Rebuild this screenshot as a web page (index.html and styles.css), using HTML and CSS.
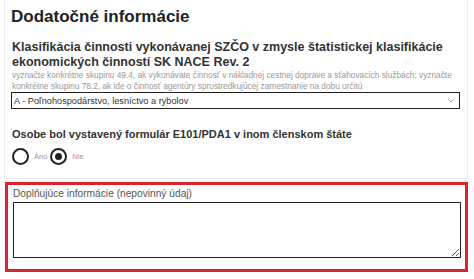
FILE: index.html
```html
<!DOCTYPE html>
<html lang="sk">
<head>
    <meta charset="UTF-8">
    <meta name="viewport" content="width=device-width, initial-scale=1.0">
    <title>Dodatočné informácie</title>
    <link rel="stylesheet" href="styles.css">
</head>
<body>
    <div class="form-card">
        <h2 class="card-title">Dodatočné informácie</h2>

        <div class="form-group">
            <label class="group-label" for="nace">Klasifikácia činnosti vykonávanej SZČO v zmysle štatistickej klasifikácie ekonomických činností SK NACE Rev. 2</label>
            <p class="group-hint">vyznačte konkrétne skupinu 49.4, ak vykonávate činnosť v nákladnej cestnej doprave a sťahovacích službách; vyznačte konkrétne skupinu 78.2, ak ide o činnosť agentúry sprostredkujúcej zamestnanie na dobu určitú</p>
            <div class="select-wrap">
                <select id="nace" class="form-select">
                    <option>A - Poľnohospodárstvo, lesníctvo a rybolov</option>
                </select>
                <svg class="select-arrow" width="6" height="4" viewBox="0 0 6 4"><path d="M0.5 0.5 L3 3 L5.5 0.5" fill="none" stroke="#888" stroke-width="0.8"/></svg>
            </div>
        </div>

        <div class="form-group radio-group">
            <div class="radio-label">Osobe bol vystavený formulár E101/PDA1 v inom členskom štáte</div>
            <div class="radio-row">
                <label class="radio-option">
                    <span class="radio-circle"></span>
                    <span class="radio-text">Áno</span>
                </label>
                <label class="radio-option">
                    <span class="radio-circle checked"></span>
                    <span class="radio-text">Nie</span>
                </label>
            </div>
        </div>
    </div>

    <div class="highlight-box">
        <label class="optional-label" for="notes">Doplňujúce informácie (nepovinný údaj)</label>
        <textarea id="notes" class="form-textarea"></textarea>
    </div>
</body>
</html>
```

FILE: styles.css
```css
/* Base styles */
body {
    font-family: "Liberation Sans", Arial, sans-serif;
    margin: 0;
    padding: 0 6px 0 4px;
    background: #ffffff;
    color: #333;
}

.form-card {
    border-left: 1px solid #ececec;
    border-right: 1px solid #ececec;
    border-bottom: 1px solid #ececec;
    padding: 7px 6px 13px 6px;
}

.card-title {
    margin: 0 0 13px 0;
    font-size: 17px;
    line-height: 20px;
    font-weight: bold;
    color: #222;
}

.form-group {
    margin: 0 0 0 1px;
}

.group-label {
    display: block;
    font-size: 12.5px;
    font-weight: bold;
    line-height: 15px;
    color: #333;
}

.group-hint {
    margin: 0;
    font-size: 8.3px;
    line-height: 11px;
    color: #999;
}

/* Select */
.select-wrap {
    position: relative;
    width: 449px;
    margin-left: -1px;
}

.form-select {
    display: block;
    width: 100%;
    height: 17px;
    padding: 0 2px;
    border: 1px solid #222;
    border-radius: 0;
    background: white;
    font-family: inherit;
    font-size: 9.2px;
    color: #333;
    appearance: none;
    -webkit-appearance: none;
}

.select-arrow {
    position: absolute;
    right: 6px;
    top: 7px;
}

/* Radios */
.radio-group {
    margin-top: 18px;
}

.radio-label {
    font-size: 11px;
    font-weight: bold;
    line-height: 15px;
    color: #333;
}

.radio-row {
    display: flex;
    gap: 3px;
    margin-top: 6px;
}

.radio-option {
    display: flex;
    align-items: center;
    gap: 5px;
}

.radio-circle {
    width: 13px;
    height: 13px;
    border: 2.5px solid #222;
    border-radius: 50%;
    display: flex;
    align-items: center;
    justify-content: center;
}

.radio-circle.checked::after {
    content: "";
    width: 7px;
    height: 7px;
    border-radius: 50%;
    background: #222;
}

.radio-text {
    font-size: 7.5px;
    color: #999;
}

/* Optional info box */
.highlight-box {
    margin-top: 3px;
    margin-left: 1px;
    border: 3px solid #d9232f;
    padding: 2px 3px 11px 5px;
}

.optional-label {
    display: block;
    font-size: 10.2px;
    line-height: 13px;
    color: #555;
    margin-bottom: 2px;
}

.form-textarea {
    display: block;
    width: 448px;
    height: 56px;
    box-sizing: border-box;
    border: 1px solid #222;
    border-radius: 0;
    margin: 0;
    resize: vertical;
}
```
